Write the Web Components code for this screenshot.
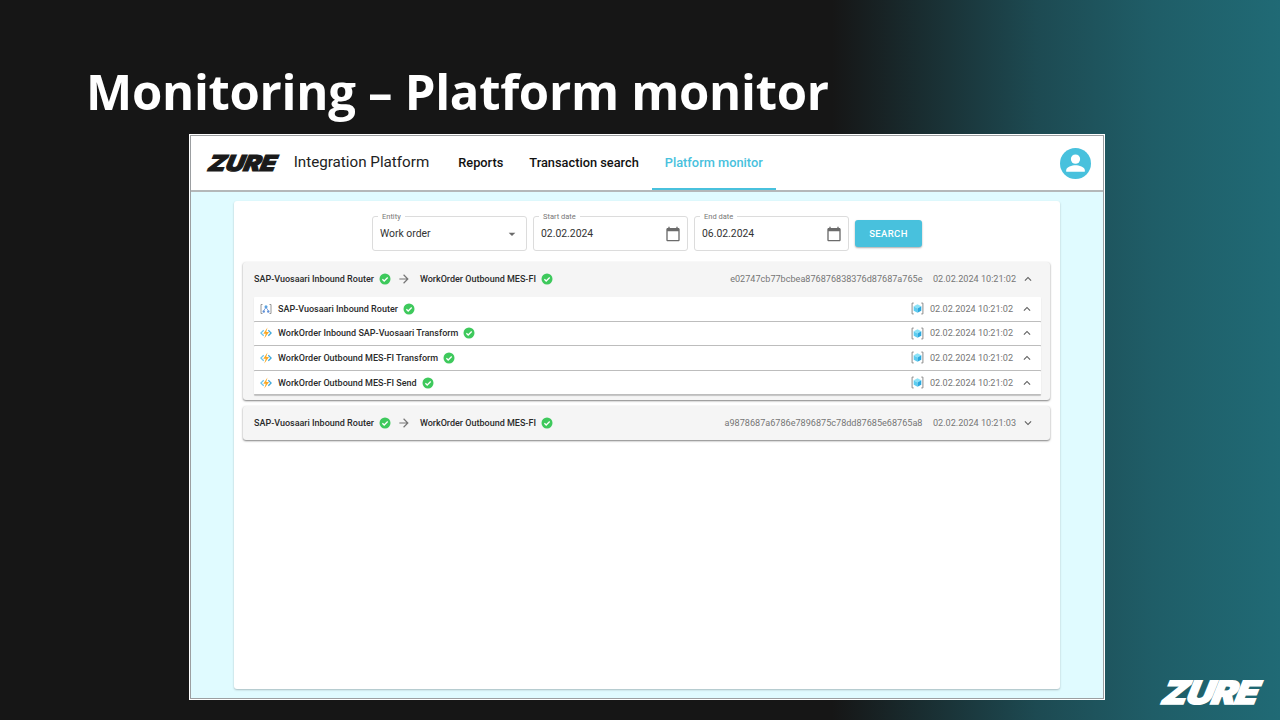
<!DOCTYPE html>
<html>
<head>
<meta charset="utf-8">
<title>Platform monitor</title>
<style>
  html, body { margin: 0; padding: 0; background: #161616; }
</style>
</head>
<body>
<slide-deck>
  <h1 slot="title">Monitoring – Platform monitor</h1>
  <platform-window>
    <app-header></app-header>
    <monitor-card>
      <search-form></search-form>
      <run-group source="SAP-Vuosaari Inbound Router" target="WorkOrder Outbound MES-FI"
        run-id="e02747cb77bcbea876876838376d87687a765e" time="02.02.2024 10:21:02" open>
        <run-row kind="router" name="SAP-Vuosaari Inbound Router" time="02.02.2024 10:21:02"></run-row>
        <run-row kind="func" name="WorkOrder Inbound SAP-Vuosaari Transform" time="02.02.2024 10:21:02"></run-row>
        <run-row kind="func" name="WorkOrder Outbound MES-FI Transform" time="02.02.2024 10:21:02"></run-row>
        <run-row kind="func" name="WorkOrder Outbound MES-FI Send" time="02.02.2024 10:21:02"></run-row>
      </run-group>
      <run-group source="SAP-Vuosaari Inbound Router" target="WorkOrder Outbound MES-FI"
        run-id="a9878687a6786e7896875c78dd87685e68765a8" time="02.02.2024 10:21:03"></run-group>
    </monitor-card>
  </platform-window>
  <zure-logo color="#fff" size="32"></zure-logo>
</slide-deck>

<script>
const ICONS = {
  check: `<circle cx="12" cy="12" r="11" fill="#3ec95c"/><path d="M6.8 12.4l3.6 3.6 7-7" fill="none" stroke="#fff" stroke-width="2.6"/>`,
  arrow: `<path fill="#757575" d="M12 4l-1.41 1.41L16.17 11H4v2h12.17l-5.58 5.59L12 20l8-8z"/>`,
  up: `<path fill="#616161" d="M12 8l-6 6 1.41 1.41L12 10.83l4.59 4.58L18 14z"/>`,
  down: `<path fill="#616161" d="M16.59 8.59L12 13.17 7.41 8.59 6 10l6 6 6-6z"/>`,
  calendar: `<path fill="#6b6b6b" d="M20 3h-1V1h-2v2H7V1H5v2H4c-1.1 0-2 .9-2 2v16c0 1.1.9 2 2 2h16c1.1 0 2-.9 2-2V5c0-1.1-.9-2-2-2zm0 18H4V8h16v13z"/>`,
  caret: `<path fill="#6b6b6b" d="M7 10l5 5 5-5z"/>`,
  user: `<circle cx="12" cy="12" r="12" fill="#48c1dd"/><circle cx="12" cy="8.6" r="3.6" fill="#fff"/><path fill="#fff" d="M4.8 17.2c0-2.6 4.6-3.9 7.2-3.9s7.2 1.3 7.2 3.9v1.1H4.8z"/>`,
  func: `<path fill="#6cc4ea" d="M0 12l6.5-6.5 1.8 1.8L3.6 12l4.7 4.7-1.8 1.8z"/><path fill="#3fa9dc" d="M24 12l-6.5-6.5-1.8 1.8 4.7 4.7-4.7 4.7 1.8 1.8z"/><path fill="#f9a825" d="M15 1L6.5 13.5h5L8.5 23l9.5-13h-5.5z"/>`,
  router: `<path fill="none" stroke="#8a8a8a" stroke-width="1.8" d="M5 3H2v18h3M19 3h3v18h-3"/><circle cx="12" cy="7.5" r="3" fill="#59a3e0"/><circle cx="7.5" cy="17" r="2.4" fill="#5f8fd6"/><circle cx="16.5" cy="17" r="2.4" fill="#5f8fd6"/><path fill="none" stroke="#5f8fd6" stroke-width="1.6" d="M7.5 15l4.5-6 4.5 6"/>`,
  cube: `<path fill="none" stroke="#8a8a8a" stroke-width="1.8" d="M5 2H2v20h3M19 2h3v20h-3"/><path fill="#8be2f7" d="M12 4l7 3.8L12 12 5 7.8z"/><path fill="#5ccdf0" d="M5 7.8L12 12v8l-7-4z"/><path fill="#2aa8de" d="M19 7.8L12 12v8l7-4z"/>`
};

class UiIcon extends HTMLElement {
  connectedCallback() {
    const size = this.getAttribute("size") ?? 12;
    const root = this.attachShadow({ mode: "open" });
    root.innerHTML = `
      <style>:host { display: inline-flex; flex: none; width: ${size}px; height: ${size}px; } svg { display: block; }</style>
      <svg width="${size}" height="${size}" viewBox="0 0 24 24">${ICONS[this.getAttribute("name")]}</svg>`;
  }
}

class ZureLogo extends HTMLElement {
  connectedCallback() {
    const color = this.getAttribute("color") ?? "#1a1a1a";
    const size = this.getAttribute("size") ?? 22;
    const root = this.attachShadow({ mode: "open" });
    root.innerHTML = `
      <style>
        :host { display: inline-block; line-height: 1; }
        :host([color="#fff"]) { position: absolute; left: 1163px; top: 677px; }
        :host([color="#fff"]) span { letter-spacing: -0.03em; }
        span {
          display: inline-block;
          font: italic 900 ${size}px/1 Inter, "Liberation Sans", sans-serif;
          color: ${color};
          -webkit-text-stroke: ${size / 20}px ${color};
          letter-spacing: -0.01em;
          transform-origin: left center;
          transform: skewX(-12deg) scaleX(1.15);
        }
      </style>
      <span>ZURE</span>`;
  }
}

class SlideDeck extends HTMLElement {
  constructor() {
    super();
    this.attachShadow({ mode: "open" }).innerHTML = `
      <style>
        :host {
          display: flex; flex-direction: column; position: relative;
          width: 1280px; height: 720px; overflow: hidden; box-sizing: border-box;
          background: linear-gradient(90deg, #161616 0, #161616 65%, #1d4a52 81%, #1f5d67 90%, #206a75 100%);
        }
        ::slotted(h1) {
          margin: 0; padding: 61px 0 0 86px; height: 73px;
          font: 700 49px/60px "Open Sans", sans-serif; letter-spacing: -.28px; color: #fff;
        }
      </style>
      <slot name="title"></slot>
      <slot></slot>`;
  }
}

class PlatformWindow extends HTMLElement {
  constructor() {
    super();
    this.attachShadow({ mode: "open" }).innerHTML = `
      <style>
        :host {
          display: flex; flex-direction: column; box-sizing: border-box;
          width: 916px; height: 566px; margin-left: 189px;
          border: 1px solid #fff; outline: 1px solid #9c9fa1; outline-offset: -2px;
          padding: 1px; background: #e0fbff;
        }
      </style>
      <slot></slot>`;
  }
}

class AppHeader extends HTMLElement {
  constructor() {
    super();
    this.attachShadow({ mode: "open" }).innerHTML = `
      <style>
        :host {
          display: flex; align-items: center; flex: none; padding: 0 12px 0 16px;
          background: #fff; border-bottom: 2px solid #b4b8b9; box-sizing: border-box; height: 56px;
          font-family: Roboto, sans-serif; color: #111; position: relative;
        }
        zure-logo { margin-left: 2px; }
        .brand { font-size: 15.2px; margin: 0 16px 2px 26px; color: #222; }
        a { display: flex; align-items: center; height: 100%; padding: 0 13px 1px; font-size: 12.8px; font-weight: 500; box-sizing: border-box; }
        a.active { color: #48c1dd; border-bottom: 2px solid #48c1dd; padding-top: 1px; }
        nav { display: flex; height: 100%; }
        .spacer { flex: 1; }
      </style>
      <zure-logo size="22"></zure-logo>
      <span class="brand">Integration Platform</span>
      <nav>
        <a>Reports</a>
        <a>Transaction search</a>
        <a class="active">Platform monitor</a>
      </nav>
      <span class="spacer"></span>
      <ui-icon name="user" size="31"></ui-icon>`;
  }
}

class MonitorCard extends HTMLElement {
  constructor() {
    super();
    this.attachShadow({ mode: "open" }).innerHTML = `
      <style>
        :host {
          display: flex; flex-direction: column; flex: 1; gap: 6px;
          margin: 9px 43px 9px; padding: 15px 10px 0 9px;
          background: #fff; border-radius: 3px; box-shadow: 0 1px 2px #00000040;
        }
      </style>
      <slot></slot>`;
  }
}

class FormField extends HTMLElement {
  connectedCallback() {
    const root = this.attachShadow({ mode: "open" });
    root.innerHTML = `
      <style>
        :host {
          display: flex; align-items: center; justify-content: space-between; position: relative;
          box-sizing: border-box; width: 155px; height: 35px; padding: 0 6px 0 7px;
          border: 1px solid #dcdcdc; border-radius: 3px;
          font: 400 10.4px Roboto, sans-serif; color: #333;
        }
        label {
          position: absolute; left: 5px; top: -5px; padding: 0 4px; background: #fff;
          font-size: 7.5px; line-height: 9px; color: #777;
        }
      </style>
      <label>${this.getAttribute("label")}</label>
      <span>${this.getAttribute("value")}</span>
      <slot></slot>`;
  }
}

class SearchForm extends HTMLElement {
  constructor() {
    super();
    this.attachShadow({ mode: "open" }).innerHTML = `
      <style>
        :host { display: flex; justify-content: center; align-items: center; gap: 6px; margin-bottom: 5px; padding-left: 1px; }
        button {
          width: 67px; height: 27px; border: 0; border-radius: 3px; background: #48c1dd; color: #fff;
          font: 500 9.5px Roboto, sans-serif; letter-spacing: .4px; box-shadow: 0 1px 2px #00000055;
        }
      </style>
      <form-field label="Entity" value="Work order"><ui-icon name="caret" size="16"></ui-icon></form-field>
      <form-field label="Start date" value="02.02.2024"><ui-icon name="calendar" size="16"></ui-icon></form-field>
      <form-field label="End date" value="06.02.2024"><ui-icon name="calendar" size="16"></ui-icon></form-field>
      <button>SEARCH</button>`;
  }
}

class RunGroup extends HTMLElement {
  connectedCallback() {
    const open = this.hasAttribute("open");
    const root = this.attachShadow({ mode: "open" });
    root.innerHTML = `
      <style>
        :host {
          display: block; background: #f5f5f5; border-radius: 3px;
          box-shadow: 0 1px 2px #00000080;
          font: 500 9px Roboto, sans-serif; color: #2b2b2b;
        }
        header { display: flex; align-items: center; height: 34px; padding: 0 15px 0 11px; }
        .arrow { margin: 0 9px 0 6px; }
        .name { margin-right: 5px; }
        .spacer { flex: 1; }
        .meta { font-weight: 400; font-size: 9.1px; color: #757575; }
        .id { margin-right: 10.5px; }
        .chev { margin-left: 5px; }
        .rows { display: flex; flex-direction: column; padding: 1px 9px 4.5px 11px; }
      </style>
      <header>
        <span class="name">${this.getAttribute("source")}</span><ui-icon name="check"></ui-icon>
        <ui-icon class="arrow" name="arrow" size="14"></ui-icon>
        <span class="name">${this.getAttribute("target")}</span><ui-icon name="check"></ui-icon>
        <span class="spacer"></span>
        <span class="meta id">${this.getAttribute("run-id")}</span>
        <span class="meta">${this.getAttribute("time")}</span>
        <ui-icon class="chev" name="${open ? "up" : "down"}" size="14"></ui-icon>
      </header>
      ${open ? `<div class="rows"><slot></slot></div>` : ""}`;
  }
}

class RunRow extends HTMLElement {
  connectedCallback() {
    const root = this.attachShadow({ mode: "open" });
    root.innerHTML = `
      <style>
        :host {
          display: flex; align-items: center; box-sizing: border-box; height: 24.6px; padding: 0 7px 0 6px;
          background: #fff; border-bottom: 1px solid #bdbdbd; border-radius: 1px;
          box-shadow: 0 1px 1px #00000033; position: relative;
        }
        .name { margin: 0 5px 0 6px; }
        .spacer { flex: 1; }
        .meta { font-weight: 400; font-size: 9.1px; color: #757575; margin: 0 7px 0 6px; }
      </style>
      <ui-icon name="${this.getAttribute("kind")}" size="12"></ui-icon>
      <span class="name">${this.getAttribute("name")}</span><ui-icon name="check"></ui-icon>
      <span class="spacer"></span>
      <ui-icon name="cube" size="13"></ui-icon>
      <span class="meta">${this.getAttribute("time")}</span>
      <ui-icon name="up" size="14"></ui-icon>`;
  }
}

customElements.define("ui-icon", UiIcon);
customElements.define("zure-logo", ZureLogo);
customElements.define("slide-deck", SlideDeck);
customElements.define("platform-window", PlatformWindow);
customElements.define("app-header", AppHeader);
customElements.define("monitor-card", MonitorCard);
customElements.define("form-field", FormField);
customElements.define("search-form", SearchForm);
customElements.define("run-group", RunGroup);
customElements.define("run-row", RunRow);
</script>
</body>
</html>
